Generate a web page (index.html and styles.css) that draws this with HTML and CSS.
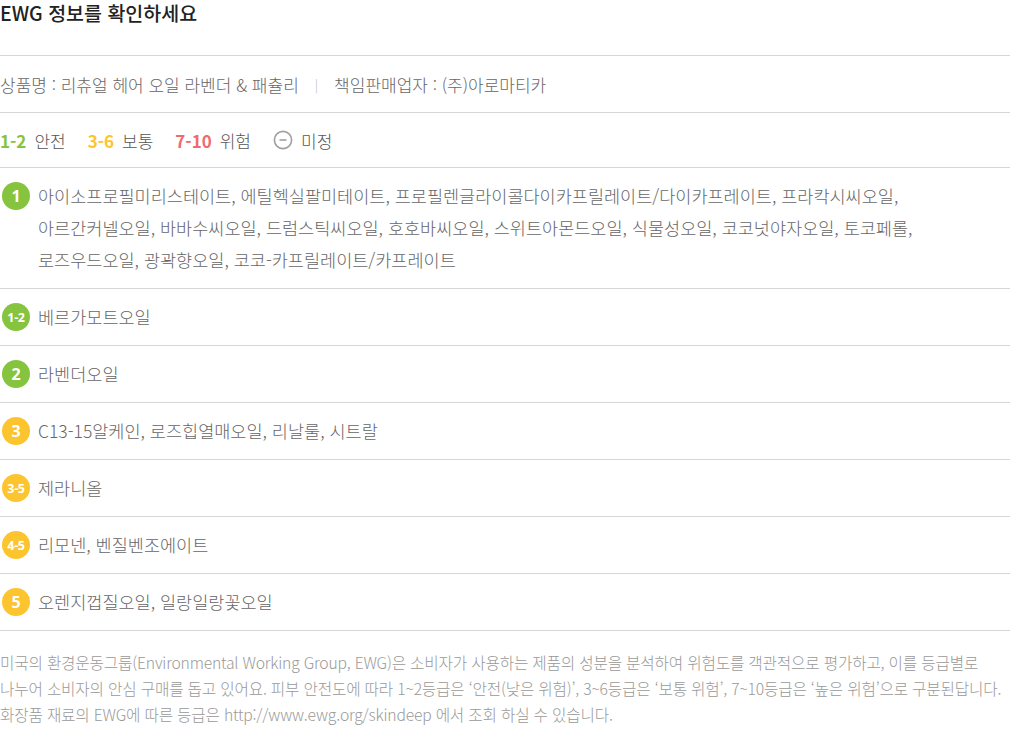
FILE: index.html
```html
<!DOCTYPE html>
<html lang="ko">
<head>
<meta charset="utf-8">
<link rel="stylesheet" href="styles.css">
</head>
<body>
<div class="ewg">
  <h2 class="title">EWG 정보를 확인하세요</h2>
  <div class="row product">
    <span>상품명 : 리츄얼 헤어 오일 라벤더 &amp; 패츌리</span>
    <span class="sep">|</span>
    <span>책임판매업자 : (주)아로마티카</span>
  </div>
  <div class="row legend">
    <span class="lg"><b class="g">1-2</b> 안전</span>
    <span class="lg"><b class="y">3-6</b> 보통</span>
    <span class="lg"><b class="r">7-10</b> 위험</span>
    <span class="lg"><svg class="minus" width="20" height="20" viewBox="0 0 20 20"><circle cx="10" cy="10" r="8.6" fill="none" stroke="#a0a0a0" stroke-width="1.6"/><line x1="6.5" y1="10" x2="13.5" y2="10" stroke="#a0a0a0" stroke-width="1.6"/></svg> 미정</span>
  </div>
  <ul class="list">
    <li class="item"><span class="badge green">1</span><p>아이소프로필미리스테이트, 에틸헥실팔미테이트, 프로필렌글라이콜다이카프릴레이트/다이카프레이트, 프라칵시씨오일,<br>아르간커넬오일, 바바수씨오일, 드럼스틱씨오일, 호호바씨오일, 스위트아몬드오일, 식물성오일, 코코넛야자오일, 토코페롤,<br>로즈우드오일, 광곽향오일, 코코-카프릴레이트/카프레이트</p></li>
    <li class="item"><span class="badge green small">1-2</span><p>베르가모트오일</p></li>
    <li class="item"><span class="badge green">2</span><p>라벤더오일</p></li>
    <li class="item"><span class="badge yellow">3</span><p>C13-15알케인, 로즈힙열매오일, 리날룰, 시트랄</p></li>
    <li class="item"><span class="badge yellow small">3-5</span><p>제라니올</p></li>
    <li class="item"><span class="badge yellow small">4-5</span><p>리모넨, 벤질벤조에이트</p></li>
    <li class="item"><span class="badge yellow">5</span><p>오렌지껍질오일, 일랑일랑꽃오일</p></li>
  </ul>
  <p class="note">미국의 환경운동그룹(Environmental Working Group, EWG)은 소비자가 사용하는 제품의 성분을 분석하여 위험도를 객관적으로 평가하고, 이를 등급별로<br>나누어 소비자의 안심 구매를 돕고 있어요. 피부 안전도에 따라 1~2등급은 ‘안전(낮은 위험)’, 3~6등급은 ‘보통 위험’, 7~10등급은 ‘높은 위험’으로 구분된답니다.<br>화장품 재료의 EWG에 따른 등급은 http://www.ewg.org/skindeep 에서 조회 하실 수 있습니다.</p>
</div>
</body>
</html>
```
FILE: styles.css
```css
html, body {
  margin: 0;
  padding: 0;
  background: #fff;
}
body {
  font-family: "Noto Sans CJK KR", "Noto Sans", sans-serif;
  color: #666;
  font-weight: 300;
}
.ewg {
  width: 1010px;
}
.title {
  margin: 0;
  height: 55px;
  font-size: 19.5px;
  font-weight: 500;
  color: #222;
  line-height: 26px;
  border-bottom: 1px solid #d6d6d6;
}
.row {
  display: flex;
  align-items: center;
  border-bottom: 1px solid #d6d6d6;
}
.product {
  height: 56px;
  gap: 16px;
  font-size: 17px;
}
.product .sep {
  color: #bbb;
  font-size: 13px;
}
.legend {
  height: 54px;
  gap: 22px;
  font-size: 17px;
}
.lg {
  display: flex;
  align-items: center;
  gap: 8px;
  color: #555;
}
.lg b {
  font-weight: 700;
}
.g { color: #86c440; }
.y { color: #fcc42e; }
.r { color: #ef6a6c; }
.minus {
  display: block;
}
.list {
  list-style: none;
  margin: 0;
  padding: 0;
}
.item {
  display: flex;
  align-items: flex-start;
  gap: 8px;
  padding: 12px 0 12px 2px;
  border-bottom: 1px solid #d6d6d6;
}
.item p {
  margin: 0;
  font-size: 17.5px;
  line-height: 32px;
  color: #666;
  white-space: nowrap;
}
.badge {
  flex: none;
  width: 28px;
  height: 28px;
  margin-top: 2px;
  border-radius: 50%;
  color: #fff;
  font-weight: 700;
  font-size: 16px;
  display: flex;
  align-items: center;
  justify-content: center;
  font-family: "Open Sans", "Noto Sans", sans-serif;
}
.badge.small {
  font-size: 12.5px;
  letter-spacing: -0.3px;
}
.badge.green { background: #86c440; }
.badge.yellow { background: #fcc42e; }
.note {
  margin: 0;
  padding: 19px 0 0;
  font-size: 15.7px;
  line-height: 26px;
  color: #999;
  letter-spacing: -0.2px;
  white-space: nowrap;
}
```
